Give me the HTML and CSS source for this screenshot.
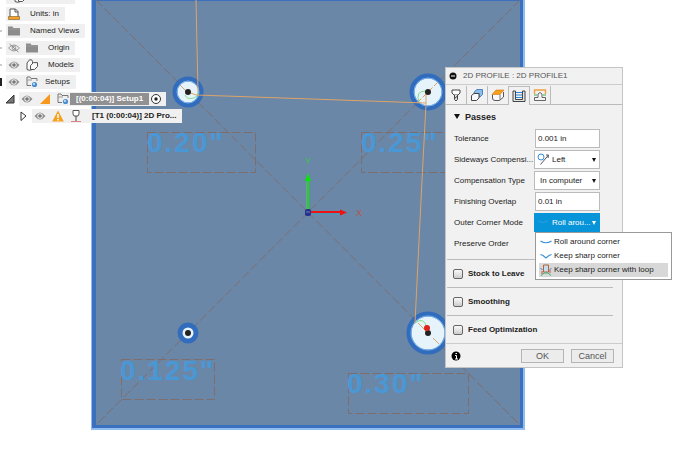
FILE: index.html
```html
<!DOCTYPE html>
<html lang="en">
<head>
  <meta charset="UTF-8">
  <meta name="viewport" content="width=device-width, initial-scale=1.0">
  <title>2D Profile</title>
  <link rel="stylesheet" href="styles.css">
</head>
<body>
  <!-- shared icons -->
  <svg class="sprite" aria-hidden="true">
    <symbol id="eye" viewBox="0 0 12 12">
      <path d="M0.5 6 Q6 -1 11.5 6 Q6 13 0.5 6Z" fill="#8d8d8d"/>
      <circle cx="6" cy="6" r="2.7" fill="#f0f0f0"/>
      <circle cx="6" cy="6" r="1.8" fill="#777"/>
    </symbol>
    <symbol id="eye-off" viewBox="0 0 12 12">
      <path d="M0.5 6 Q6 0 11.5 6 Q6 12 0.5 6Z" fill="none" stroke="#9a9a9a"/>
      <circle cx="6" cy="6" r="1.9" fill="none" stroke="#9a9a9a"/>
      <path d="M1.5 2 L10.5 10" stroke="#8a8a8a"/>
    </symbol>
    <symbol id="folder" viewBox="0 0 12 12">
      <path d="M0 1.500 H4.500 L5.500 3 H12 V10.500 H0Z" fill="#8c8c8c"/>
      <path d="M0 4 H12" stroke="#a9a9a9" stroke-width="0.6"/>
    </symbol>
    <symbol id="bodies" viewBox="0 0 12 12">
      <path d="M1 4 L3.5 0.8 Q6.5 0.2 6.5 2.5 V10.5 Q3.5 12 1 10.5Z" fill="#fafafa" stroke="#555"/>
      <path d="M4.500 6.500 L7.500 3.600 H11.500 V7.500 L8.500 10.500 H4.500Z" fill="#fafafa" stroke="#555" stroke-linejoin="round"/>
    </symbol>
    <symbol id="setup" viewBox="0 0 12 12">
      <path d="M5 9.5 H1 V1 H4 L5 2.5 H11 V5" fill="none" stroke="#777"/>
      <path d="M1 4 H6" stroke="#999"/>
      <circle cx="8.5" cy="8.5" r="2.6" fill="#4a8fd0"/>
      <circle cx="8" cy="8" r="1.1" fill="#cfe6fa"/>
    </symbol>
  </svg>

  <main class="viewport">
    <svg class="model" width="530" height="434" viewBox="0 0 530 434" role="img" aria-label="Plate with four holes">
      <rect x="91" y="-2" width="434" height="432" fill="#8fbdf0"/>
      <rect x="92" y="0" width="431" height="428" fill="#3a70bd"/>
      <rect x="96" y="1" width="424" height="424" fill="#6a87a7"/>

      <g class="sketch">
        <path d="M96 0 L520 425"/>
        <path d="M520 0 L96 425"/>
        <rect x="147.500" y="132.500" width="108" height="40"/>
        <rect x="361.500" y="132.500" width="108" height="40"/>
        <rect x="121.500" y="359.500" width="93" height="40"/>
        <rect x="348.500" y="373.500" width="120" height="40"/>
      </g>

      <g class="size-label">
        <text x="147" y="152">0.20"</text>
        <text x="361" y="152">0.25"</text>
        <text x="120" y="380">0.125"</text>
        <text x="347" y="393">0.30"</text>
      </g>

      <g class="hole">
        <circle cx="188" cy="92" r="13"/>
        <circle cx="428" cy="92" r="16"/>
        <circle cx="188" cy="333" r="8"/>
        <circle cx="428" cy="333" r="19"/>
      </g>
      <g class="hole-rim">
        <circle cx="188" cy="92" r="11"/>
        <circle cx="428" cy="92" r="14"/>
        <circle cx="428" cy="333" r="17"/>
      </g>

      <g class="lead">
        <path d="M185 95 Q187 100 194 98 Q198 97 198 92"/>
        <path d="M419 102 Q415 91 426 91"/>
        <path d="M415 323 Q424 316 427 328"/>
      </g>
      <g class="toolpath">
        <path d="M196 0 L198 92"/>
        <path d="M188 92 L196 95 L426 103"/>
        <path d="M426 92 L426 104 L422 180 L415 323"/>
        <path d="M180 85 L188 93"/>
        <path d="M417 103 L438 82" stroke-dasharray="6 2"/>
        <path d="M418 323 L426 331 M433 338 L439 344"/>
      </g>

      <g fill="#222">
        <circle cx="188" cy="92" r="3"/>
        <circle cx="428" cy="92" r="3"/>
        <circle cx="188" cy="333" r="3"/>
        <circle cx="428" cy="333" r="3"/>
      </g>
      <circle cx="427" cy="328" r="3" fill="#e0201c"/>

      <!-- origin axes -->
      <path d="M307 209 V182" stroke="#b08ad8"/>
      <path d="M308 212 V178" stroke="#0be40b" stroke-width="2"/>
      <path d="M308 173 L311 181 H305Z" fill="#0be40b"/>
      <path d="M308 212 H341" stroke="#ee1111" stroke-width="2"/>
      <path d="M312 214 H340" stroke="#3b9fc0"/>
      <path d="M347 212.500 L340 209.500 V215.500Z" fill="#ee1111"/>
      <rect x="305" y="209" width="6" height="7" rx="2" fill="#24308f"/>
      <path d="M306 212 H310" stroke="#6a87a7"/>
      <text class="axis-y" x="305" y="164">Y</text>
      <text class="axis-x" x="356" y="216">X</text>
    </svg>

    <ul class="tree">
      <li class="row">
        <span class="twisty"></span>
        <span class="node node-root"><svg class="icon"><use href="#bodies"/></svg></span>
      </li>
      <li class="row">
        <span class="twisty"></span>
        <span class="node">
          <svg class="icon" viewBox="0 0 12 12">
            <path d="M2 9 V1 H7.500 L10 3.500 V9" fill="#fff" stroke="#555"/>
            <path d="M7 1 V4 H10" fill="none" stroke="#555"/>
            <path d="M0.500 8.500 H11.500 V11.500 H0.500Z" fill="#f5a028" stroke="#7a5a28" stroke-width="0.600"/>
          </svg>
          <span class="name">Units: in</span>
        </span>
      </li>
      <li class="row">
        <span class="twisty twisty-light"></span>
        <span class="node">
          <svg class="icon"><use href="#folder"/></svg>
          <span class="name">Named Views</span>
        </span>
      </li>
      <li class="row">
        <span class="twisty twisty-light"></span>
        <span class="node">
          <svg class="icon"><use href="#eye-off"/></svg>
          <svg class="icon"><use href="#folder"/></svg>
          <span class="name">Origin</span>
        </span>
      </li>
      <li class="row">
        <span class="twisty twisty-light"></span>
        <span class="node">
          <svg class="icon"><use href="#eye"/></svg>
          <svg class="icon"><use href="#bodies"/></svg>
          <span class="name">Models</span>
        </span>
      </li>
      <li class="row">
        <span class="twisty twisty-dark"></span>
        <span class="node">
          <svg class="icon"><use href="#eye"/></svg>
          <svg class="icon"><use href="#setup"/></svg>
          <span class="name name-tight">Setups</span>
        </span>
      </li>
      <li class="row level-2">
        <svg class="arrow" viewBox="0 0 10 10"><path d="M9 1 V9 H1Z" fill="#777" stroke="#333"/></svg>
        <span class="node">
          <svg class="icon"><use href="#eye"/></svg>
          <svg class="icon" viewBox="0 0 12 12"><path d="M11 1 V11 H1Z" fill="#f7981d"/></svg>
          <svg class="icon"><use href="#setup"/></svg>
          <span class="name selected">[(0:00:04)] Setup1</span>
          <svg class="icon target" viewBox="0 0 12 12">
            <circle cx="6" cy="6" r="4.500" fill="#fff" stroke="#333"/>
            <circle cx="6" cy="6" r="1.700" fill="#222"/>
          </svg>
        </span>
      </li>
      <li class="row level-3">
        <svg class="arrow" viewBox="0 0 10 10"><path d="M3 1 L8 5 L3 9.500Z" fill="#fff" stroke="#333"/></svg>
        <span class="node">
          <svg class="icon"><use href="#eye"/></svg>
          <svg class="icon" viewBox="0 0 12 12">
            <path d="M6 0.500 L11.800 11.500 H0.200Z" fill="#f7a01d"/>
            <path d="M6 4 V8 M6 9 V10.500" stroke="#fff" stroke-width="1.500"/>
          </svg>
          <svg class="icon" viewBox="0 0 12 12">
            <path d="M3 0.500 H9 V4 L8 6 H4 L3 4Z" fill="#fff" stroke="#555"/>
            <path d="M6 6 V11" stroke="#444"/>
            <path d="M1 11.500 H11" stroke="#e08080"/>
          </svg>
          <span class="name operation">[T1 (0:00:04)] 2D Pro...</span>
        </span>
      </li>
    </ul>

    <form class="dialog">
      <header class="titlebar">
        <svg class="collapse" viewBox="0 0 8 8"><circle cx="4" cy="4" r="3.500" fill="#111"/><path d="M2 4 H6" stroke="#fff"/></svg>
        <h1>2D PROFILE : 2D PROFILE1</h1>
      </header>

      <nav class="tabs">
        <button type="button" class="tab" aria-label="Tool">
          <svg viewBox="0 0 14 14">
            <path d="M3 2 H11 V5 L9 7 H5 L3 5Z" fill="#fff" stroke="#444"/>
            <path d="M5.500 7 V11.500 L7 13 L8.500 11.500 V7" fill="#ddd" stroke="#444"/>
            <path d="M5.500 10.500 L8.500 8" stroke="#444"/>
          </svg>
        </button>
        <button type="button" class="tab" aria-label="Geometry">
          <svg viewBox="0 0 14 14">
            <path d="M4.500 3.500 L7 1.500 H12.500 V6.500 L10 9 H9 V5.500 L4 5.500Z" fill="#8dbbea" stroke="#2f6fb5" stroke-width="0.800"/>
            <path d="M1.500 7.500 L4 5.500 H9 V10 L6.500 12.500 H1.500Z" fill="#fafafa" stroke="#444"/>
          </svg>
        </button>
        <button type="button" class="tab" aria-label="Heights">
          <svg viewBox="0 0 14 14">
            <path d="M1.500 6.500 V10 Q1.500 12.500 4 12.500 H8.500 L12.500 9 V4" fill="#fafafa" stroke="#555"/>
            <path d="M1 6.500 L5 2 H13 L9 6.500Z" fill="#f7a01d" stroke="#c97a10" stroke-width="0.600"/>
            <path d="M9 6.500 V12" stroke="#777"/>
          </svg>
        </button>
        <button type="button" class="tab active" aria-label="Passes">
          <svg viewBox="0 0 14 14">
            <path d="M1 2 H3.500 V10.500 H10.500 V2 H13 V12.500 H1Z" fill="#e4e4e4" stroke="#333" stroke-width="0.900"/>
            <path d="M4 3.500 H10 M4 6 H10 M4 8.500 H10" stroke="#2f83d8"/>
          </svg>
        </button>
        <button type="button" class="tab" aria-label="Linking">
          <svg viewBox="0 0 14 14">
            <path d="M1.500 6 V2 H12.500 V6" fill="none" stroke="#f0a040" stroke-width="1.400"/>
            <path d="M1 7 H4 M10 7 H13" stroke="#3fae5a"/>
            <path d="M1.500 12.500 V9.500 H5 V6 Q7 3 9 6 V9.500 H12.500 V12.500Z" fill="#f4f4f4" stroke="#666"/>
          </svg>
        </button>
      </nav>

      <section class="passes">
        <h2>Passes</h2>
        <div class="field">
          <label for="tolerance">Tolerance</label>
          <input type="text" id="tolerance" value="0.001 in">
        </div>
        <div class="field">
          <label for="sideways">Sideways Compensi...</label>
          <div class="picker">
            <svg class="picker-icon" viewBox="0 0 12 12">
              <circle cx="4" cy="4" r="3" fill="#fff" stroke="#2f8fe0"/>
              <path d="M3.500 11.500 L11.500 2" stroke="#555"/>
              <path d="M9 2 L11.500 2 L11 5" fill="none" stroke="#555"/>
            </svg>
            <select id="sideways" class="with-icon"><option>Left</option><option>Right</option></select>
          </div>
        </div>
        <div class="field">
          <label for="compensation">Compensation Type</label>
          <div class="picker">
            <select id="compensation"><option>In computer</option><option>In control</option></select>
          </div>
        </div>
        <div class="field">
          <label for="overlap">Finishing Overlap</label>
          <input type="text" id="overlap" value="0.01 in">
        </div>
        <div class="field">
          <label for="corner">Outer Corner Mode</label>
          <div class="picker open">
            <svg class="picker-icon" viewBox="0 0 12 12"><path d="M1 5 Q6 8 11 5" fill="none" stroke="#2f9ee2"/></svg>
            <select id="corner" class="with-icon"><option>Roll arou...</option></select>
            <div class="menu" role="listbox" aria-label="Outer Corner Mode">
              <button type="button" role="option">
                <svg viewBox="0 0 12 12"><path d="M0.500 5 Q6 8.500 11.500 5" fill="none" stroke="#3b93dd" stroke-width="1.200"/></svg>
                Roll around corner
              </button>
              <button type="button" role="option">
                <svg viewBox="0 0 12 12"><path d="M0.500 4.500 L3 5.500 L6 8 L9 5.500 L11.500 4.500" fill="none" stroke="#3b93dd" stroke-width="1.200"/></svg>
                Keep sharp corner
              </button>
              <button type="button" role="option" class="hover">
                <svg viewBox="0 0 12 12">
                  <path d="M0.500 4 L2.500 6 M11.500 4 L9.500 6" fill="none" stroke="#3b83c8"/>
                  <path d="M3.500 1 H8.500 V8 H3.500Z" fill="#c9dcea" stroke="#b0653a"/>
                  <path d="M1 11.500 L4 9 H8 L11 11.500" fill="none" stroke="#2fb36a"/>
                  <path d="M2 7 V10 M10 6 V9" stroke="#e04545"/>
                </svg>
                Keep sharp corner with loop
              </button>
            </div>
          </div>
        </div>
        <div class="field">
          <label for="order">Preserve Order</label>
          <input type="checkbox" id="order">
        </div>
      </section>

      <div class="group"><input type="checkbox" id="stock"><label for="stock">Stock to Leave</label></div>
      <div class="group"><input type="checkbox" id="smoothing"><label for="smoothing">Smoothing</label></div>
      <div class="group"><input type="checkbox" id="feed"><label for="feed">Feed Optimization</label></div>

      <footer class="actions">
        <svg class="info" viewBox="0 0 10 10"><circle cx="5" cy="5" r="4.500" fill="#000"/><path d="M4 4.500 H5.500 V8 M4 8 H7" fill="none" stroke="#fff"/><path d="M4.500 2.500 H6" stroke="#fff"/></svg>
        <button type="button">OK</button>
        <button type="button">Cancel</button>
      </footer>
    </form>
  </main>
</body>
</html>
```

FILE: styles.css
```css
* {
  box-sizing: border-box;
}

body {
  margin: 0;
  background: #fff;
  color: #222;
  font-family: "Liberation Sans", Arial, sans-serif;
  font-size: 8px;
  line-height: 12px;
}

button, input, select {
  font: inherit;
  color: inherit;
}

.sprite {
  position: absolute;
  width: 0;
  height: 0;
}

.viewport {
  position: relative;
  min-height: 100vh;
  overflow: hidden;
}

/* model canvas */
.model {
  display: block;
}

.sketch {
  fill: none;
  stroke: #7f6d6c;
  stroke-dasharray: 9 3;
}

.size-label {
  fill: #4a97d6;
  font-size: 28px;
  font-weight: bold;
  letter-spacing: 2px;
}

.hole {
  fill: #e6f3fb;
  stroke: #326cbc;
  stroke-width: 5px;
}

.hole-rim {
  fill: none;
  stroke: #7db8f0;
}

.lead {
  fill: none;
  stroke: #7ce08a;
}

.toolpath {
  fill: none;
  stroke: #dca468;
}

.axis-x,
.axis-y {
  font-size: 9px;
}

.axis-x {
  fill: #b8544c;
}

.axis-y {
  fill: #35c552;
}

/* browser tree */
.tree {
  position: absolute;
  top: -10px;
  left: 0;
  margin: 0;
  padding: 0;
  list-style: none;
}

.row {
  display: flex;
  align-items: center;
  height: 14px;
  margin-bottom: 3px;
}

.twisty {
  width: 2px;
  height: 8px;
  margin-right: 4px;
}

.twisty-light {
  height: 2px;
  background: #ccc;
}

.twisty-dark {
  background: #222;
}

.node {
  display: flex;
  align-items: center;
  gap: 6px;
  height: 14px;
  padding: 0 6px 0 2px;
  background: #f0f0f0;
}

.node-root {
  width: 69px;
  padding-left: 8px;
}

.icon {
  flex: none;
  width: 12px;
  height: 12px;
}

.name {
  padding-left: 4px;
  white-space: nowrap;
}

.name-tight {
  padding-left: 1px;
}

.arrow {
  width: 10px;
  height: 10px;
  margin-right: 4px;
}

.level-2 {
  padding-left: 5px;
}

.level-3 {
  padding-left: 18px;
}

.selected {
  margin-left: -5px;
  padding: 0 6px;
  background: #919191;
  color: #fff;
  font-weight: bold;
}

.target {
  margin-left: -5px;
}

.level-2 .node {
  padding-right: 4px;
}

.operation {
  font-weight: bold;
}

/* dialog */
.dialog {
  position: absolute;
  top: 67px;
  left: 445px;
  width: 178px;
  border: 1px solid #c4c4c4;
  background: #f1f1f1;
}

.titlebar {
  display: flex;
  align-items: center;
  gap: 6px;
  height: 17px;
  padding-left: 3px;
  border-bottom: 1px solid #ccc;
}

.titlebar h1 {
  margin: 0;
  color: #555;
  font-size: 8px;
  font-weight: normal;
}

.collapse {
  width: 8px;
  height: 8px;
}

.tabs {
  display: flex;
  height: 20px;
  padding-top: 1px;
  border-bottom: 1px solid #bbb;
}

.tab {
  display: flex;
  align-items: center;
  justify-content: center;
  width: 21px;
  height: 18px;
  padding: 0;
  border: 0;
  border-right: 1px solid #bbb;
  background: none;
}

.tab svg {
  width: 14px;
  height: 14px;
}

.tab.active {
  height: 19px;
  border-top: 1px solid #bbb;
  background: #f1f1f1;
}

.passes {
  padding: 4px 22px 5px 8px;
}

.passes h2 {
  display: flex;
  align-items: center;
  gap: 5px;
  height: 15px;
  margin: 0 0 4px;
  font-size: 9px;
  font-weight: bold;
}

.passes h2::before {
  content: "";
  border: 3px solid transparent;
  border-top: 5px solid #111;
  border-bottom: 0;
}

.field {
  display: flex;
  align-items: center;
  justify-content: space-between;
  height: 21px;
  white-space: nowrap;
}

.field input[type="text"] {
  width: 65px;
  height: 19px;
  padding: 0 2px;
  border: 1px solid #bbb;
  background: #fff;
}

.picker {
  position: relative;
  width: 66px;
  height: 19px;
}

.picker select {
  width: 100%;
  height: 100%;
  padding: 0 6px 0 5px;
  border: 1px solid #bbb;
  border-radius: 0;
  background: #fff;
  appearance: none;
}

.picker select.with-icon {
  padding-left: 17px;
}

.picker-icon {
  position: absolute;
  top: 3px;
  left: 3px;
  width: 12px;
  height: 12px;
}

.picker::after {
  content: "";
  position: absolute;
  top: 8px;
  right: 4px;
  border: 2px solid transparent;
  border-top: 4px solid #111;
  border-bottom: 0;
}

.picker.open select {
  border-color: #0894d8;
  background: #0894d8;
  color: #fff;
}

.picker.open::after {
  border-top-color: #fff;
}

.menu {
  position: absolute;
  z-index: 1;
  top: 19px;
  left: 1px;
  width: 137px;
  padding: 2px 3px;
  border: 1px solid #999;
  background: #fff;
}

.menu button {
  display: flex;
  align-items: center;
  gap: 2px;
  width: 100%;
  height: 14px;
  padding: 0 0 0 1px;
  border: 0;
  background: none;
  white-space: nowrap;
}

.menu button.hover {
  background: #d8d8d8;
}

.menu svg {
  width: 12px;
  height: 12px;
}

input[type="checkbox"] {
  width: 10px;
  height: 10px;
  margin: 0;
  border: 1px solid #666;
  border-radius: 2px;
  background: linear-gradient(#fafafa, #ccc);
  appearance: none;
}

.field input[type="checkbox"] {
  margin-right: 55px;
}

.group {
  display: flex;
  align-items: center;
  gap: 5px;
  height: 28px;
  margin: 0 9px 0 1px;
  padding-left: 6px;
  border-top: 1px solid #bbb;
  font-weight: bold;
}

.actions {
  display: flex;
  align-items: center;
  gap: 7px;
  height: 24px;
  padding: 0 8px 0 5px;
  border-top: 1px solid #ccc;
}

.info {
  width: 10px;
  height: 10px;
  margin-right: auto;
}

.actions button {
  width: 43px;
  height: 14px;
  padding: 0;
  border: 1px solid #b5b5b5;
  background: #ececec;
  color: #555;
  font-size: 9px;
}
```
